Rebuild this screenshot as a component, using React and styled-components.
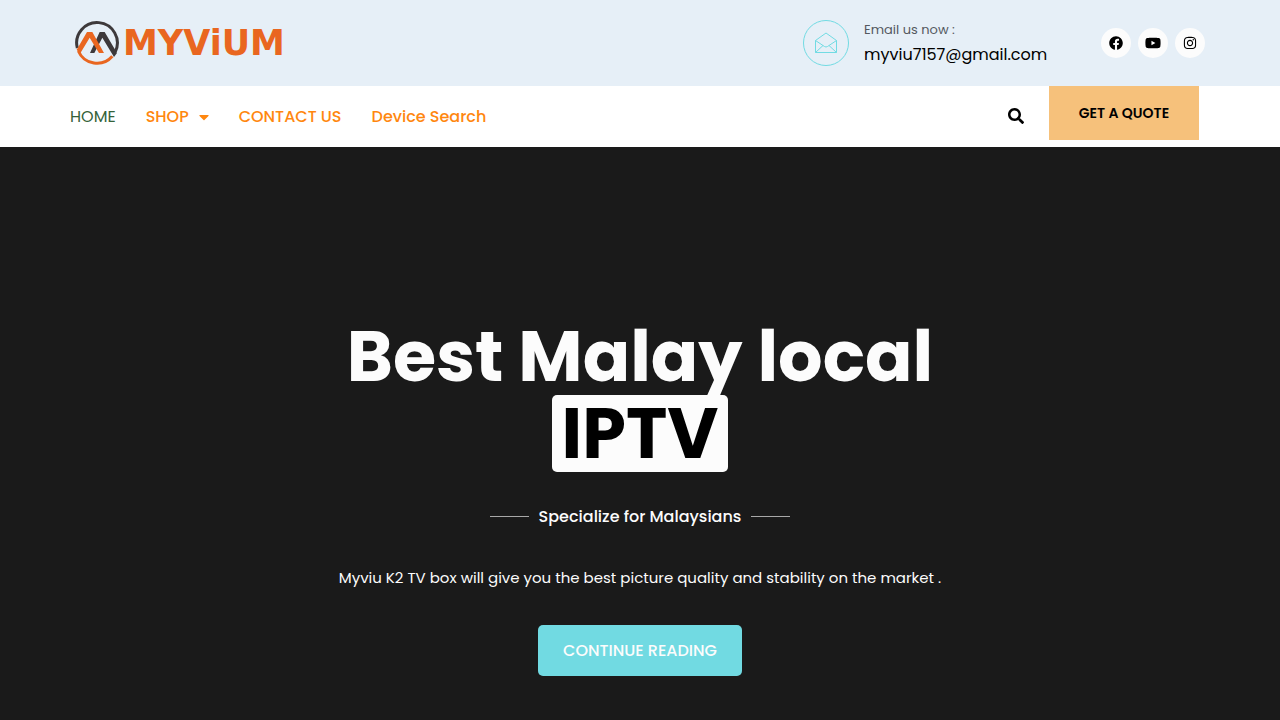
import React from 'react';
import styled, { createGlobalStyle } from 'styled-components';
import { FaFacebook, FaYoutube, FaInstagram, FaCaretDown, FaSearch } from 'react-icons/fa';

const GlobalStyle = createGlobalStyle`
  *, *::before, *::after { box-sizing: border-box; }
  body {
    margin: 0;
    background: #1a1a1a;
    font-family: Poppins, Inter, "Liberation Sans", sans-serif;
  }
  a { color: inherit; text-decoration: none; }
`;

const Page = styled.div`
  display: flex;
  flex-direction: column;
  min-height: 100vh;
`;

const TopBar = styled.header`
  background: #e6eff7;
`;

const Container = styled.div`
  display: flex;
  align-items: ${({ $align }) => $align || 'center'};
  justify-content: space-between;
  max-width: 1140px;
  margin: 0 auto;
  min-height: ${({ $height }) => $height}px;
  padding-right: ${({ $end }) => $end || 0}px;
`;

const Logo = styled.a`
  display: flex;
  align-items: center;
  gap: 4px;
  padding-left: 5px;
  color: #e96620;
`;

const Wordmark = styled.span`
  font: bold 35px/44px "DejaVu Sans", sans-serif;
`;

const Contact = styled.div`
  display: flex;
  align-items: center;
`;

const MailBadge = styled.span`
  display: flex;
  align-items: center;
  justify-content: center;
  width: 46px;
  height: 46px;
  margin-right: 15px;
  border: 1px solid #71dbe3;
  border-radius: 50%;
  color: #71dbe3;
`;

const MailText = styled.div`
  display: flex;
  flex-direction: column;
  min-width: 187px;
  margin-right: 50px;
`;

const MailLabel = styled.span`
  color: #54595f;
  font-size: 13px;
  line-height: 24px;
`;

const MailAddress = styled.a`
  color: #000;
  font-size: 16px;
  line-height: 26px;
`;

const Socials = styled.div`
  display: flex;
  gap: 7px;
`;

const SocialLink = styled.a`
  display: flex;
  align-items: center;
  justify-content: center;
  width: 30px;
  height: 30px;
  border-radius: 50%;
  background: #fcfcfc;
  color: #000;
`;

const NavBar = styled.div`
  background: #fff;
`;

const Menu = styled.nav`
  display: flex;
  align-items: center;
  gap: 30px;
`;

const MenuLink = styled.a`
  display: flex;
  align-items: center;
  gap: 10px;
  color: ${({ $active }) => ($active ? '#356239' : '#ff870f')};
  font-size: 16px;
  font-weight: ${({ $active }) => ($active ? 400 : 500)};
  line-height: 20px;

  svg { width: 10px; }
`;

const Actions = styled.div`
  display: flex;
  align-items: flex-start;
  gap: 25px;
`;

const SearchButton = styled.button`
  display: flex;
  align-items: center;
  height: 60px;
  padding: 0;
  border: 0;
  background: none;
  color: #000;
  font-size: 16px;
  cursor: pointer;
`;

const QuoteButton = styled.button`
  width: 150px;
  height: 54px;
  padding: 0;
  border: 0;
  background: #f6c17b;
  color: #000;
  font-family: inherit;
  font-size: 14px;
  font-weight: 600;
  cursor: pointer;
`;

const Hero = styled.main`
  display: flex;
  flex: 1;
  flex-direction: column;
  align-items: center;
  padding: 171px 20px 44px;
  background: #1a1a1a;
  color: #fcfcfc;
  text-align: center;
`;

const Title = styled.h1`
  margin: 0;
  font-size: 70px;
  font-weight: 700;
  line-height: 77px;
`;

const Highlight = styled.span`
  display: block;
  width: fit-content;
  margin: 0 auto;
  padding: 0 10px;
  border-radius: 5px;
  background: #fcfcfc;
  color: #000;
`;

const Tagline = styled.h2`
  display: flex;
  align-items: center;
  gap: 10px;
  margin: 32px 0 0;
  font-size: 16px;
  font-weight: 500;
  line-height: 25px;

  &::before, &::after {
    content: "";
    width: 39px;
    height: 1px;
    background: #a8a8a8;
  }
`;

const Summary = styled.p`
  margin: 38px 0 0;
  font-size: 15px;
  line-height: 22px;
`;

const ReadButton = styled.button`
  min-width: 204px;
  height: 51px;
  margin-top: 36px;
  padding: 0 20px;
  border: 0;
  border-radius: 5px;
  background: #71dae2;
  color: #fcfcfc;
  font-family: inherit;
  font-size: 16px;
  font-weight: 500;
  cursor: pointer;
`;

const LogoMark = () => (
  <svg width="44" height="44" viewBox="0 0 132 132" fill="none" aria-hidden="true">
    <path d="M7 81A61 61 0 1 1 121 92" stroke="#3d393b" strokeWidth="9" />
    <path d="M45 96L74 33H89L126 96L117 108L82 50L58 96Z" fill="#3d393b" />
    <path d="M10 90A61 61 0 0 0 112 106" stroke="#e96620" strokeWidth="9" />
    <path d="M5 86L36 33H52L87 96H72L44 50L15 98Z" fill="#e96620" />
  </svg>
);

const OpenMail = () => (
  <svg width="22" height="22" viewBox="0 0 22 22" fill="none" stroke="currentColor" aria-hidden="true">
    <path d="M.5 8.5V20.5H21.5V8.5L11 1Z" />
    <path d="M.5 8.5L9.5 14.5Q11 15.5 12.5 14.5L21.5 8.5M.5 20.5L8 13.5M21.5 20.5L14 13.5" />
  </svg>
);

const socials = [
  ['Facebook', FaFacebook, 14],
  ['YouTube', FaYoutube, 16],
  ['Instagram', FaInstagram, 14],
];

export default function App() {
  return (
    <Page>
      <GlobalStyle />
      <TopBar>
        <Container $height={86} $end={5}>
          <Logo href="#">
            <LogoMark />
            <Wordmark>MYViUM</Wordmark>
          </Logo>
          <Contact>
            <MailBadge><OpenMail /></MailBadge>
            <MailText>
              <MailLabel>Email us now :</MailLabel>
              <MailAddress href="mailto:myviu7157@gmail.com">myviu7157@gmail.com</MailAddress>
            </MailText>
            <Socials>
              {socials.map(([name, Icon, size]) => (
                <SocialLink key={name} href="#" aria-label={name}><Icon size={size} /></SocialLink>
              ))}
            </Socials>
          </Contact>
        </Container>
      </TopBar>
      <NavBar>
        <Container $height={61} $end={11} $align="stretch">
          <Menu>
            <MenuLink href="#" $active>HOME</MenuLink>
            <MenuLink href="#">SHOP <FaCaretDown /></MenuLink>
            <MenuLink href="#">CONTACT US</MenuLink>
            <MenuLink href="#">Device Search</MenuLink>
          </Menu>
          <Actions>
            <SearchButton type="button" aria-label="Search"><FaSearch /></SearchButton>
            <QuoteButton type="button">GET A QUOTE</QuoteButton>
          </Actions>
        </Container>
      </NavBar>
      <Hero>
        <Title>Best Malay local <Highlight>IPTV</Highlight></Title>
        <Tagline>Specialize for Malaysians</Tagline>
        <Summary>Myviu K2 TV box will give you the best picture quality and stability on the market .</Summary>
        <ReadButton type="button">CONTINUE READING</ReadButton>
      </Hero>
    </Page>
  );
}
